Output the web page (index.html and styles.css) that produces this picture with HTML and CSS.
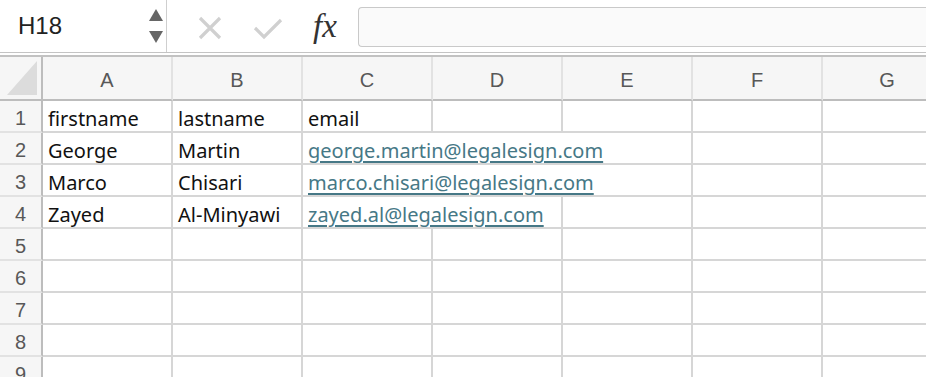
FILE: index.html
```html
<!DOCTYPE html>
<html>
<head>
<meta charset="utf-8">
<link rel="stylesheet" href="styles.css">
</head>
<body>
<div class="toolbar">
  <div class="namebox">
    <span class="ref">H18</span>
    <div class="spin">
      <svg width="14" height="12" viewBox="0 0 14 12"><polygon points="7,0 14,12 0,12" fill="#666"/></svg>
      <svg width="14" height="12" viewBox="0 0 14 12"><polygon points="0,0 14,0 7,12" fill="#666"/></svg>
    </div>
  </div>
  <div class="actions">
    <svg class="ico" width="26" height="26" viewBox="0 0 26 26"><path d="M3 3 L23 23 M23 3 L3 23" stroke="#d0d0d0" stroke-width="3.2" fill="none"/></svg>
    <svg class="ico" width="30" height="26" viewBox="0 0 30 26"><path d="M2 13 L11 22 L28 5" stroke="#d0d0d0" stroke-width="3.2" fill="none"/></svg>
    <span class="fx">fx</span>
  </div>
  <div class="formula"></div>
</div>
<div class="sheet">
  <div class="grid">
    <div class="corner"><svg width="30" height="34" viewBox="0 0 30 34"><polygon points="30,0 30,34 0,34" fill="#dcdcdc"/></svg></div>
    <div class="ch">A</div><div class="ch">B</div><div class="ch">C</div><div class="ch">D</div><div class="ch">E</div><div class="ch">F</div><div class="ch">G</div>

    <div class="rh">1</div><div class="c">firstname</div><div class="c">lastname</div><div class="c">email</div><div class="c"></div><div class="c"></div><div class="c"></div><div class="c"></div>

    <div class="rh">2</div><div class="c">George</div><div class="c">Martin</div><div class="c span3"><span class="link">george.martin@legalesign.com</span></div><div class="c"></div><div class="c"></div>

    <div class="rh">3</div><div class="c">Marco</div><div class="c">Chisari</div><div class="c span3"><span class="link">marco.chisari@legalesign.com</span></div><div class="c"></div><div class="c"></div>

    <div class="rh">4</div><div class="c">Zayed</div><div class="c">Al-Minyawi</div><div class="c span2"><span class="link">zayed.al@legalesign.com</span></div><div class="c"></div><div class="c"></div><div class="c"></div>

    <div class="rh">5</div><div class="c"></div><div class="c"></div><div class="c"></div><div class="c"></div><div class="c"></div><div class="c"></div><div class="c"></div>
    <div class="rh">6</div><div class="c"></div><div class="c"></div><div class="c"></div><div class="c"></div><div class="c"></div><div class="c"></div><div class="c"></div>
    <div class="rh">7</div><div class="c"></div><div class="c"></div><div class="c"></div><div class="c"></div><div class="c"></div><div class="c"></div><div class="c"></div>
    <div class="rh">8</div><div class="c"></div><div class="c"></div><div class="c"></div><div class="c"></div><div class="c"></div><div class="c"></div><div class="c"></div>
    <div class="rh">9</div><div class="c"></div><div class="c"></div><div class="c"></div><div class="c"></div><div class="c"></div><div class="c"></div><div class="c"></div>
  </div>
</div>
</body>
</html>
```

FILE: styles.css
```css
html, body {
  margin: 0;
  padding: 0;
  background: #ffffff;
  overflow: hidden;
  width: 926px;
  height: 377px;
}
body {
  font-family: "Liberation Sans", Arial, sans-serif;
}
.toolbar {
  display: flex;
  align-items: stretch;
  height: 53px;
  border-bottom: 1px solid #c4c4c4;
  box-sizing: border-box;
}
.namebox {
  width: 167px;
  box-sizing: border-box;
  border-right: 1px solid #cfcfcf;
  display: flex;
  align-items: center;
  justify-content: space-between;
  padding: 0 3px 0 18px;
}
.ref {
  font-size: 24px;
  color: #222;
  font-family: "Liberation Sans", Arial, sans-serif;
  margin-top: 0px;
}
.spin {
  display: flex;
  flex-direction: column;
  gap: 10px;
  margin-top: 0px;
}
.spin svg { display: block; }
.actions {
  display: flex;
  align-items: center;
  width: 190px;
  padding-left: 30px;
  box-sizing: border-box;
}
.actions .ico:first-child { margin-right: 30px; margin-top: 4px; }
.actions .ico:nth-child(2) { margin-right: 31px; margin-top: 4px; }
.fx {
  font-family: "Liberation Serif", "DejaVu Serif", serif;
  font-style: italic;
  font-size: 33px;
  color: #333;
  margin-top: 0px;
  margin-left: -1px;
}
.formula {
  flex: 1;
  margin: 7px 0 5px 1px;
  border: 1px solid #c9c9c9;
  border-right: none;
  border-radius: 4px 0 0 4px;
  background: #fafafa;
}
.sheet {
  margin-top: 2px;
  border-top: 2px solid #c2c2c2;
}
.grid {
  display: grid;
  grid-template-columns: 43px repeat(7, 130px);
  grid-template-rows: 44px repeat(9, 32px);
  width: 953px;
}
.grid > div {
  box-sizing: border-box;
}
.corner {
  background: #f6f6f6;
  border-right: 2px solid #bdbdbd;
  border-bottom: 2px solid #bdbdbd;
  display: flex;
  align-items: flex-end;
  justify-content: flex-end;
  padding: 0 4px 4px 0;
}
.corner svg { display: block; }
.ch {
  background: #f6f6f6;
  border-right: 2px solid #e2e2e2;
  border-bottom: 2px solid #bdbdbd;
  display: flex;
  align-items: center;
  justify-content: center;
  font-family: "Liberation Sans", Arial, sans-serif;
  font-size: 20px;
  color: #585858;
  padding-top: 4px;
}
.rh {
  background: #f6f6f6;
  border-right: 2px solid #bdbdbd;
  border-bottom: 2px solid #e2e2e2;
  display: flex;
  align-items: center;
  justify-content: center;
  font-family: "Liberation Sans", Arial, sans-serif;
  font-size: 20px;
  color: #585858;
  padding-top: 4px;
}
.c {
  border-right: 2px solid #d6d6d6;
  border-bottom: 2px solid #d6d6d6;
  font-family: "Noto Sans", "Open Sans", sans-serif;
  font-size: 20px;
  color: #111;
  padding: 5px 0 0 5px;
  display: flex;
  align-items: center;
  white-space: nowrap;
  overflow: hidden;
}
.span3 { grid-column: span 3; }
.span2 { grid-column: span 2; }
.link {
  color: #467886;
  text-decoration: underline;
  text-decoration-thickness: 1.5px;
  text-underline-offset: 3px;
}
```
